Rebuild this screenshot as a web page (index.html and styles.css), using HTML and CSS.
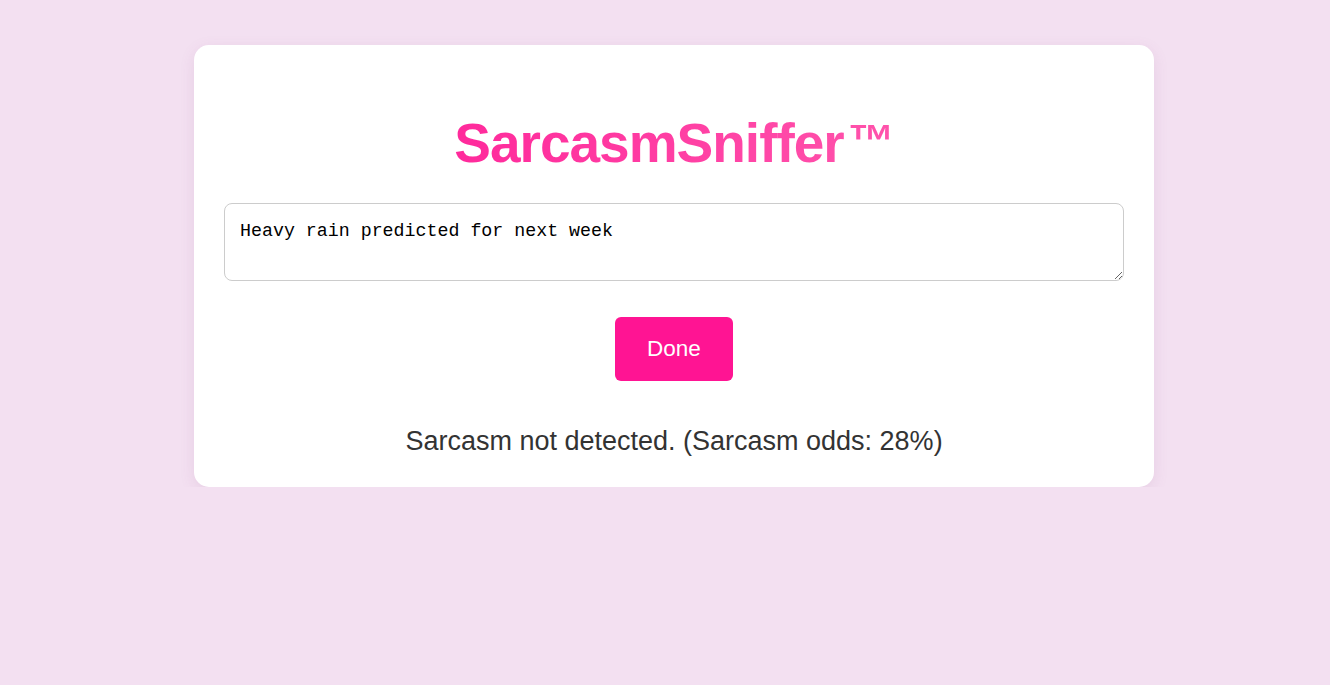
FILE: index.html
```html
<!DOCTYPE html>
<html lang="en">
<head>
    <meta charset="UTF-8">
    <meta name="viewport" content="width=device-width, initial-scale=1.0">
    <title>SarcasmSniffer</title>
    <link rel="stylesheet" href="styles.css">
</head>
<body>
    <div class="container">
        <h1 class="title">SarcasmSniffer<span class="tm">™</span></h1>
        <textarea id="input" class="input-box">Heavy rain predicted for next week</textarea>
        <div class="actions">
            <button class="btn">Done</button>
        </div>
        <p id="result" class="result">Sarcasm not detected. (Sarcasm odds: 28%)</p>
    </div>
</body>
</html>
```

FILE: styles.css
```css
body {
    font-family: Arial, "Liberation Sans", sans-serif;
    background-color: #f3e0f1;
    margin: 0;
    padding: 45px 0 0 18px;
}
.container {
    width: 900px;
    margin: 0 auto;
    padding: 30px;
    background: white;
    border-radius: 15px;
    box-shadow: 0 4px 15px rgba(150, 80, 140, 0.12);
    text-align: center;
}
.title {
    font-size: 55px;
    font-weight: bold;
    margin: 36px 0 28px;
    letter-spacing: -1px;
    background: linear-gradient(90deg, #ff1493, #ff69b4);
    -webkit-background-clip: text;
    background-clip: text;
    color: transparent;
}
.tm {
    font-size: 47px;
    margin-left: 4px;
    vertical-align: 5px;
}
.input-box {
    display: block;
    box-sizing: border-box;
    width: 100%;
    height: 78px;
    padding: 17px 15px 10px;
    border: 1px solid #ccc;
    border-radius: 8px;
    font-family: Consolas, "Liberation Mono", monospace;
    font-size: 18.3px;
    color: #000;
    resize: vertical;
}
.actions {
    margin-top: 36px;
}
.btn {
    padding: 20px 32px;
    background-color: #ff1493;
    color: white;
    border: none;
    border-radius: 6px;
    cursor: pointer;
    font-family: Arial, "Liberation Sans", sans-serif;
    font-size: 22.5px;
    line-height: 24px;
}
.result {
    margin: 45px 0 0;
    font-size: 27px;
    color: #333;
}
```
